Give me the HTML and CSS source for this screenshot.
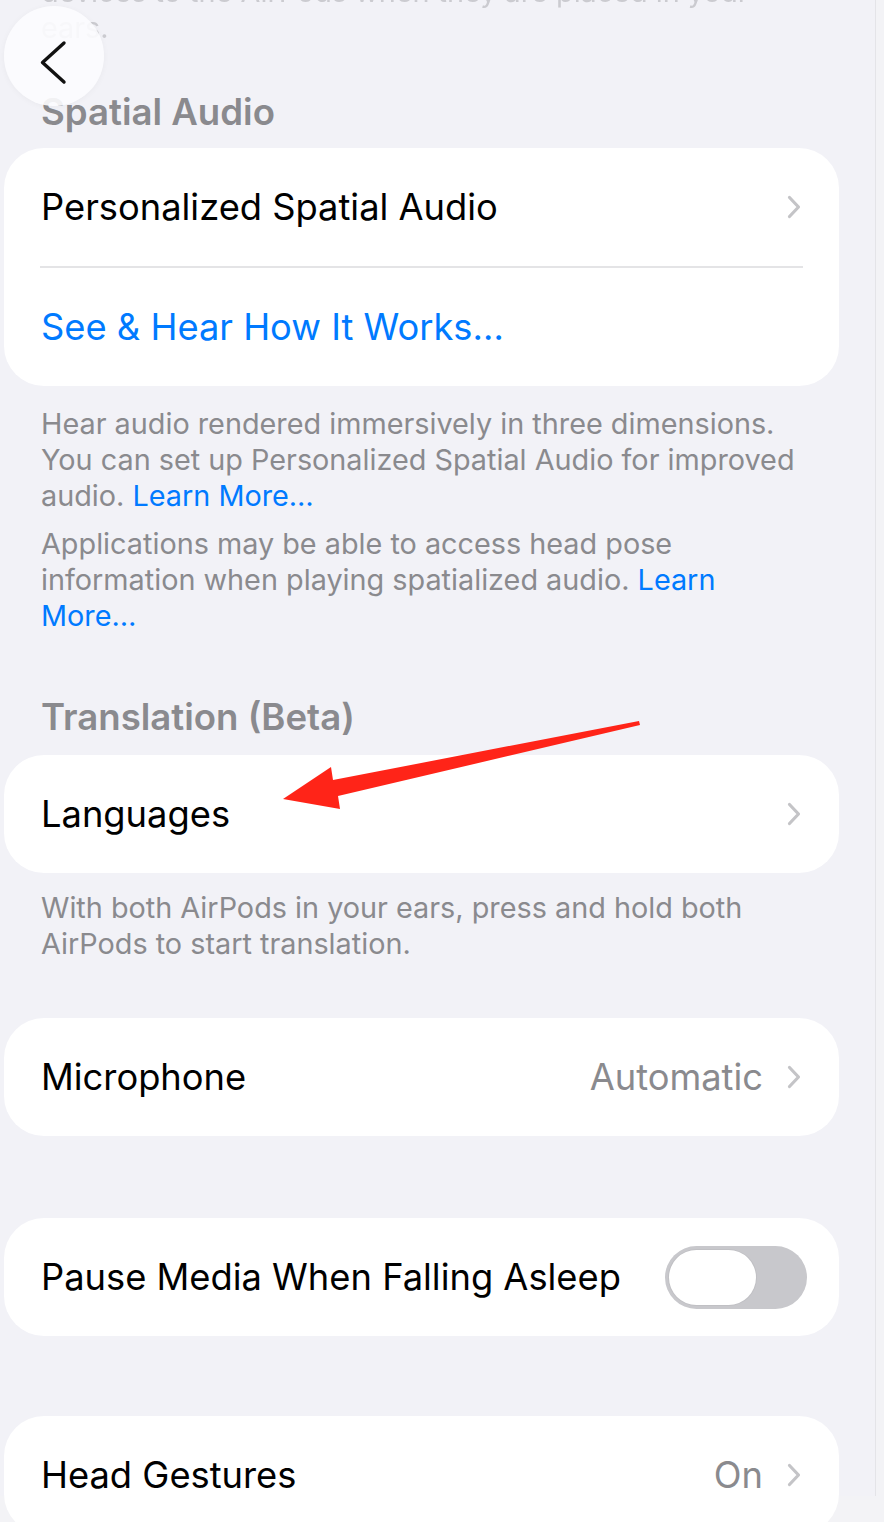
FILE: index.html
```html
<!DOCTYPE html>
<html lang="en">
<head>
<meta charset="utf-8">
<link rel="stylesheet" href="styles.css">
</head>
<body>
<div class="page">
  <p class="faded">devices to the AirPods when they are placed in your ears.</p>

  <h2 class="section-title">Spatial Audio</h2>
  <div class="card">
    <div class="row">
      <span class="label">Personalized Spatial Audio</span>
      <span class="trail"><svg class="chev" viewBox="0 0 14 24" width="14" height="24"><path d="M2.5 2.5 L11.5 12 L2.5 21.5"/></svg></span>
    </div>
    <div class="divider"></div>
    <div class="row">
      <span class="label link">See &amp; Hear How It Works…</span>
    </div>
  </div>
  <div class="footer first">
    <p>Hear audio rendered immersively in three dimensions. You can set up Personalized Spatial Audio for improved audio. <span class="link">Learn More…</span></p>
    <p>Applications may be able to access head pose information when playing spatialized audio. <span class="link">Learn More…</span></p>
  </div>

  <h2 class="section-title t2">Translation (Beta)</h2>
  <div class="card">
    <div class="row">
      <span class="label">Languages</span>
      <span class="trail"><svg class="chev" viewBox="0 0 14 24" width="14" height="24"><path d="M2.5 2.5 L11.5 12 L2.5 21.5"/></svg></span>
    </div>
  </div>
  <div class="footer second">
    <p>With both AirPods in your ears, press and hold both AirPods to start translation.</p>
  </div>

  <div class="card c3">
    <div class="row">
      <span class="label">Microphone</span>
      <span class="trail"><span class="value">Automatic</span><svg class="chev" viewBox="0 0 14 24" width="14" height="24"><path d="M2.5 2.5 L11.5 12 L2.5 21.5"/></svg></span>
    </div>
  </div>

  <div class="card c4">
    <div class="row toggle-row">
      <span class="label">Pause Media When Falling Asleep</span>
      <span class="toggle"><span class="knob"></span></span>
    </div>
  </div>

  <div class="card c5">
    <div class="row">
      <span class="label">Head Gestures</span>
      <span class="trail"><span class="value">On</span><svg class="chev" viewBox="0 0 14 24" width="14" height="24"><path d="M2.5 2.5 L11.5 12 L2.5 21.5"/></svg></span>
    </div>
  </div>
</div>

<button class="back" aria-label="Back">
  <svg viewBox="0 0 100 100" width="100" height="100"><path d="M60 37 L38.5 56.5 L60 76"/></svg>
</button>

<svg class="annotation" width="884" height="1522" viewBox="0 0 884 1522">
  <polygon points="283,799 331,767 333,780 639,721 640,725 338,796 340,809" fill="#ff2418"/>
</svg>
</body>
</html>
```

FILE: styles.css
```css
* { box-sizing: border-box; }

html, body {
  margin: 0;
  padding: 0;
}

body {
  width: 884px;
  height: 1522px;
  overflow: hidden;
  background: #f3f3f6;
  font-family: "Inter", "Liberation Sans", sans-serif;
  position: relative;
}

.page {
  width: 876px;
  height: 1522px;
  background: #f2f2f7;
  border-right: 1px solid #e4e4e8;
  padding: 0 36px 0 4px;
}

.faded {
  margin: -26px 0 0 37px;
  font-size: 28.8px;
  line-height: 36px;
  color: #cbcbd0;
  width: 760px;
  filter: blur(0.6px);
}

.section-title {
  margin: 46px 0 16px 37px;
  font-size: 36.6px;
  line-height: 40px;
  font-weight: 600;
  color: #8a8a8e;
}

.section-title.t2 {
  margin-top: 63px;
  margin-bottom: 18px;
}

.card {
  background: #ffffff;
  border-radius: 40px;
  overflow: hidden;
}

.card.c3 { margin-top: 56px; }
.card.c4 { margin-top: 82px; }
.card.c5 { margin-top: 80px; }

.row {
  height: 118px;
  display: flex;
  align-items: center;
  justify-content: space-between;
  padding: 0 38px 0 37px;
}

.toggle-row {
  padding-right: 32px;
}

.label {
  font-size: 36.3px;
  color: #000000;
}

.link {
  color: #007aff;
}

.divider {
  height: 2px;
  background: #e4e4e6;
  margin: 0 36px 0 36px;
}

.trail {
  display: flex;
  align-items: center;
  gap: 24px;
}

.value {
  font-size: 36.3px;
  color: #8a8a8e;
}

.chev {
  display: block;
}

.chev path {
  fill: none;
  stroke: #c4c4c7;
  stroke-width: 3.2;
  stroke-linecap: round;
  stroke-linejoin: round;
}

.footer {
  margin: 20px 0 0 37px;
  font-size: 28.8px;
  line-height: 36px;
  color: #8a8a8e;
  width: 758px;
}

.footer p {
  margin: 0 0 12px 0;
}

.footer.second {
  margin-top: 17px;
}

.footer.second p {
  margin: 0;
}

.toggle {
  width: 142px;
  height: 63px;
  border-radius: 32px;
  background: #c8c8cc;
  padding: 4px;
  display: flex;
  align-items: center;
}

.knob {
  width: 87px;
  height: 55px;
  border-radius: 28px;
  background: #ffffff;
  box-shadow: 0 0 0 1px rgba(0,0,0,0.04);
}

.back {
  position: absolute;
  left: 4px;
  top: 6px;
  width: 100px;
  height: 100px;
  border: none;
  padding: 0;
  border-radius: 50%;
  background: rgba(252, 252, 254, 0.9);
  box-shadow: 0 1px 6px rgba(0,0,0,0.04);
}

.back svg {
  display: block;
}

.back path {
  fill: none;
  stroke: #111111;
  stroke-width: 3.4;
  stroke-linecap: round;
  stroke-linejoin: round;
}

.annotation {
  position: absolute;
  left: 0;
  top: 0;
  pointer-events: none;
}
```
